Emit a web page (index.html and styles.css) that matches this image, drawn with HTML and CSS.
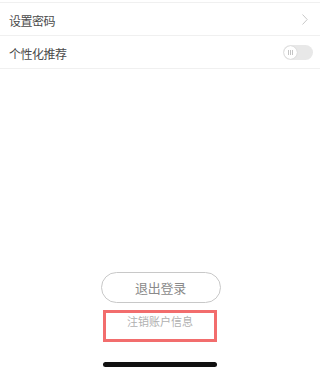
FILE: index.html
```html
<!DOCTYPE html>
<html lang="zh-CN">
<head>
    <meta charset="UTF-8">
    <title>设置</title>
    <link rel="stylesheet" href="styles.css">
</head>
<body>
<div class="page">
    <div class="list">
        <div class="row">
            <span class="label">设置密码</span>
            <svg class="arrow" width="6" height="11" viewBox="0 0 6 11">
                <path d="M0.5 0.5 L5.2 5.5 L0.5 10.5" fill="none" stroke="#c8c8c8" stroke-width="1"/>
            </svg>
        </div>
        <div class="row">
            <span class="label">个性化推荐</span>
            <div class="switch">
                <div class="knob"><i></i><i></i><i></i></div>
            </div>
        </div>
    </div>

    <div class="footer">
        <div class="logout">退出登录</div>
        <div class="cancel">注销账户信息</div>
        <div class="home-bar"></div>
    </div>
</div>
</body>
</html>
```

FILE: styles.css
```css
html, body {
    margin: 0;
    padding: 0;
    background-color: #fff;
}
body {
    font-family: "Noto Sans CJK SC", "Noto Sans", sans-serif;
}
.page {
    display: flex;
    flex-direction: column;
    height: 372px;
    box-sizing: border-box;
    padding-top: 2px;
}
.list {
    border-top: 1px solid #f0f0f0;
}
.row {
    display: flex;
    align-items: center;
    justify-content: space-between;
    height: 32px;
    padding: 0 7px 0 9px;
    border-bottom: 1px solid #f0f0f0;
}
.label {
    font-size: 12px;
    letter-spacing: -0.5px;
    padding-top: 2px;
    color: #4a4a4a;
}
.arrow {
    margin-right: 5px;
}
.switch {
    display: flex;
    align-items: center;
    width: 30px;
    height: 15px;
    border-radius: 8px;
    background-color: #e8e8e8;
}
.knob {
    display: flex;
    align-items: center;
    justify-content: center;
    gap: 1px;
    width: 13px;
    height: 13px;
    margin-left: 1px;
    border-radius: 50%;
    background-color: #fff;
    box-shadow: 0 0 1px rgba(0, 0, 0, 0.25);
}
.knob i {
    display: block;
    width: 1px;
    height: 5px;
    background-color: #c4c4c4;
}

.footer {
    margin-top: auto;
    display: flex;
    flex-direction: column;
    align-items: center;
    padding-bottom: 5px;
}
.logout {
    width: 118px;
    height: 29px;
    line-height: 29px;
    margin-left: 1px;
    text-align: center;
    border: 1px solid #c8c8c8;
    border-radius: 16px;
    font-size: 13px;
    letter-spacing: -0.3px;
    color: #8a8a8a;
}
.cancel {
    width: 108px;
    height: 25px;
    margin-top: 7px;
    padding-top: 1px;
    text-align: center;
    border: 3px solid #f26d6d;
    font-size: 11px;
    line-height: 14px;
    color: #b0b0b0;
}
.home-bar {
    width: 114px;
    height: 5px;
    margin-top: 20px;
    border-radius: 3px;
    background-color: #111;
}
```
